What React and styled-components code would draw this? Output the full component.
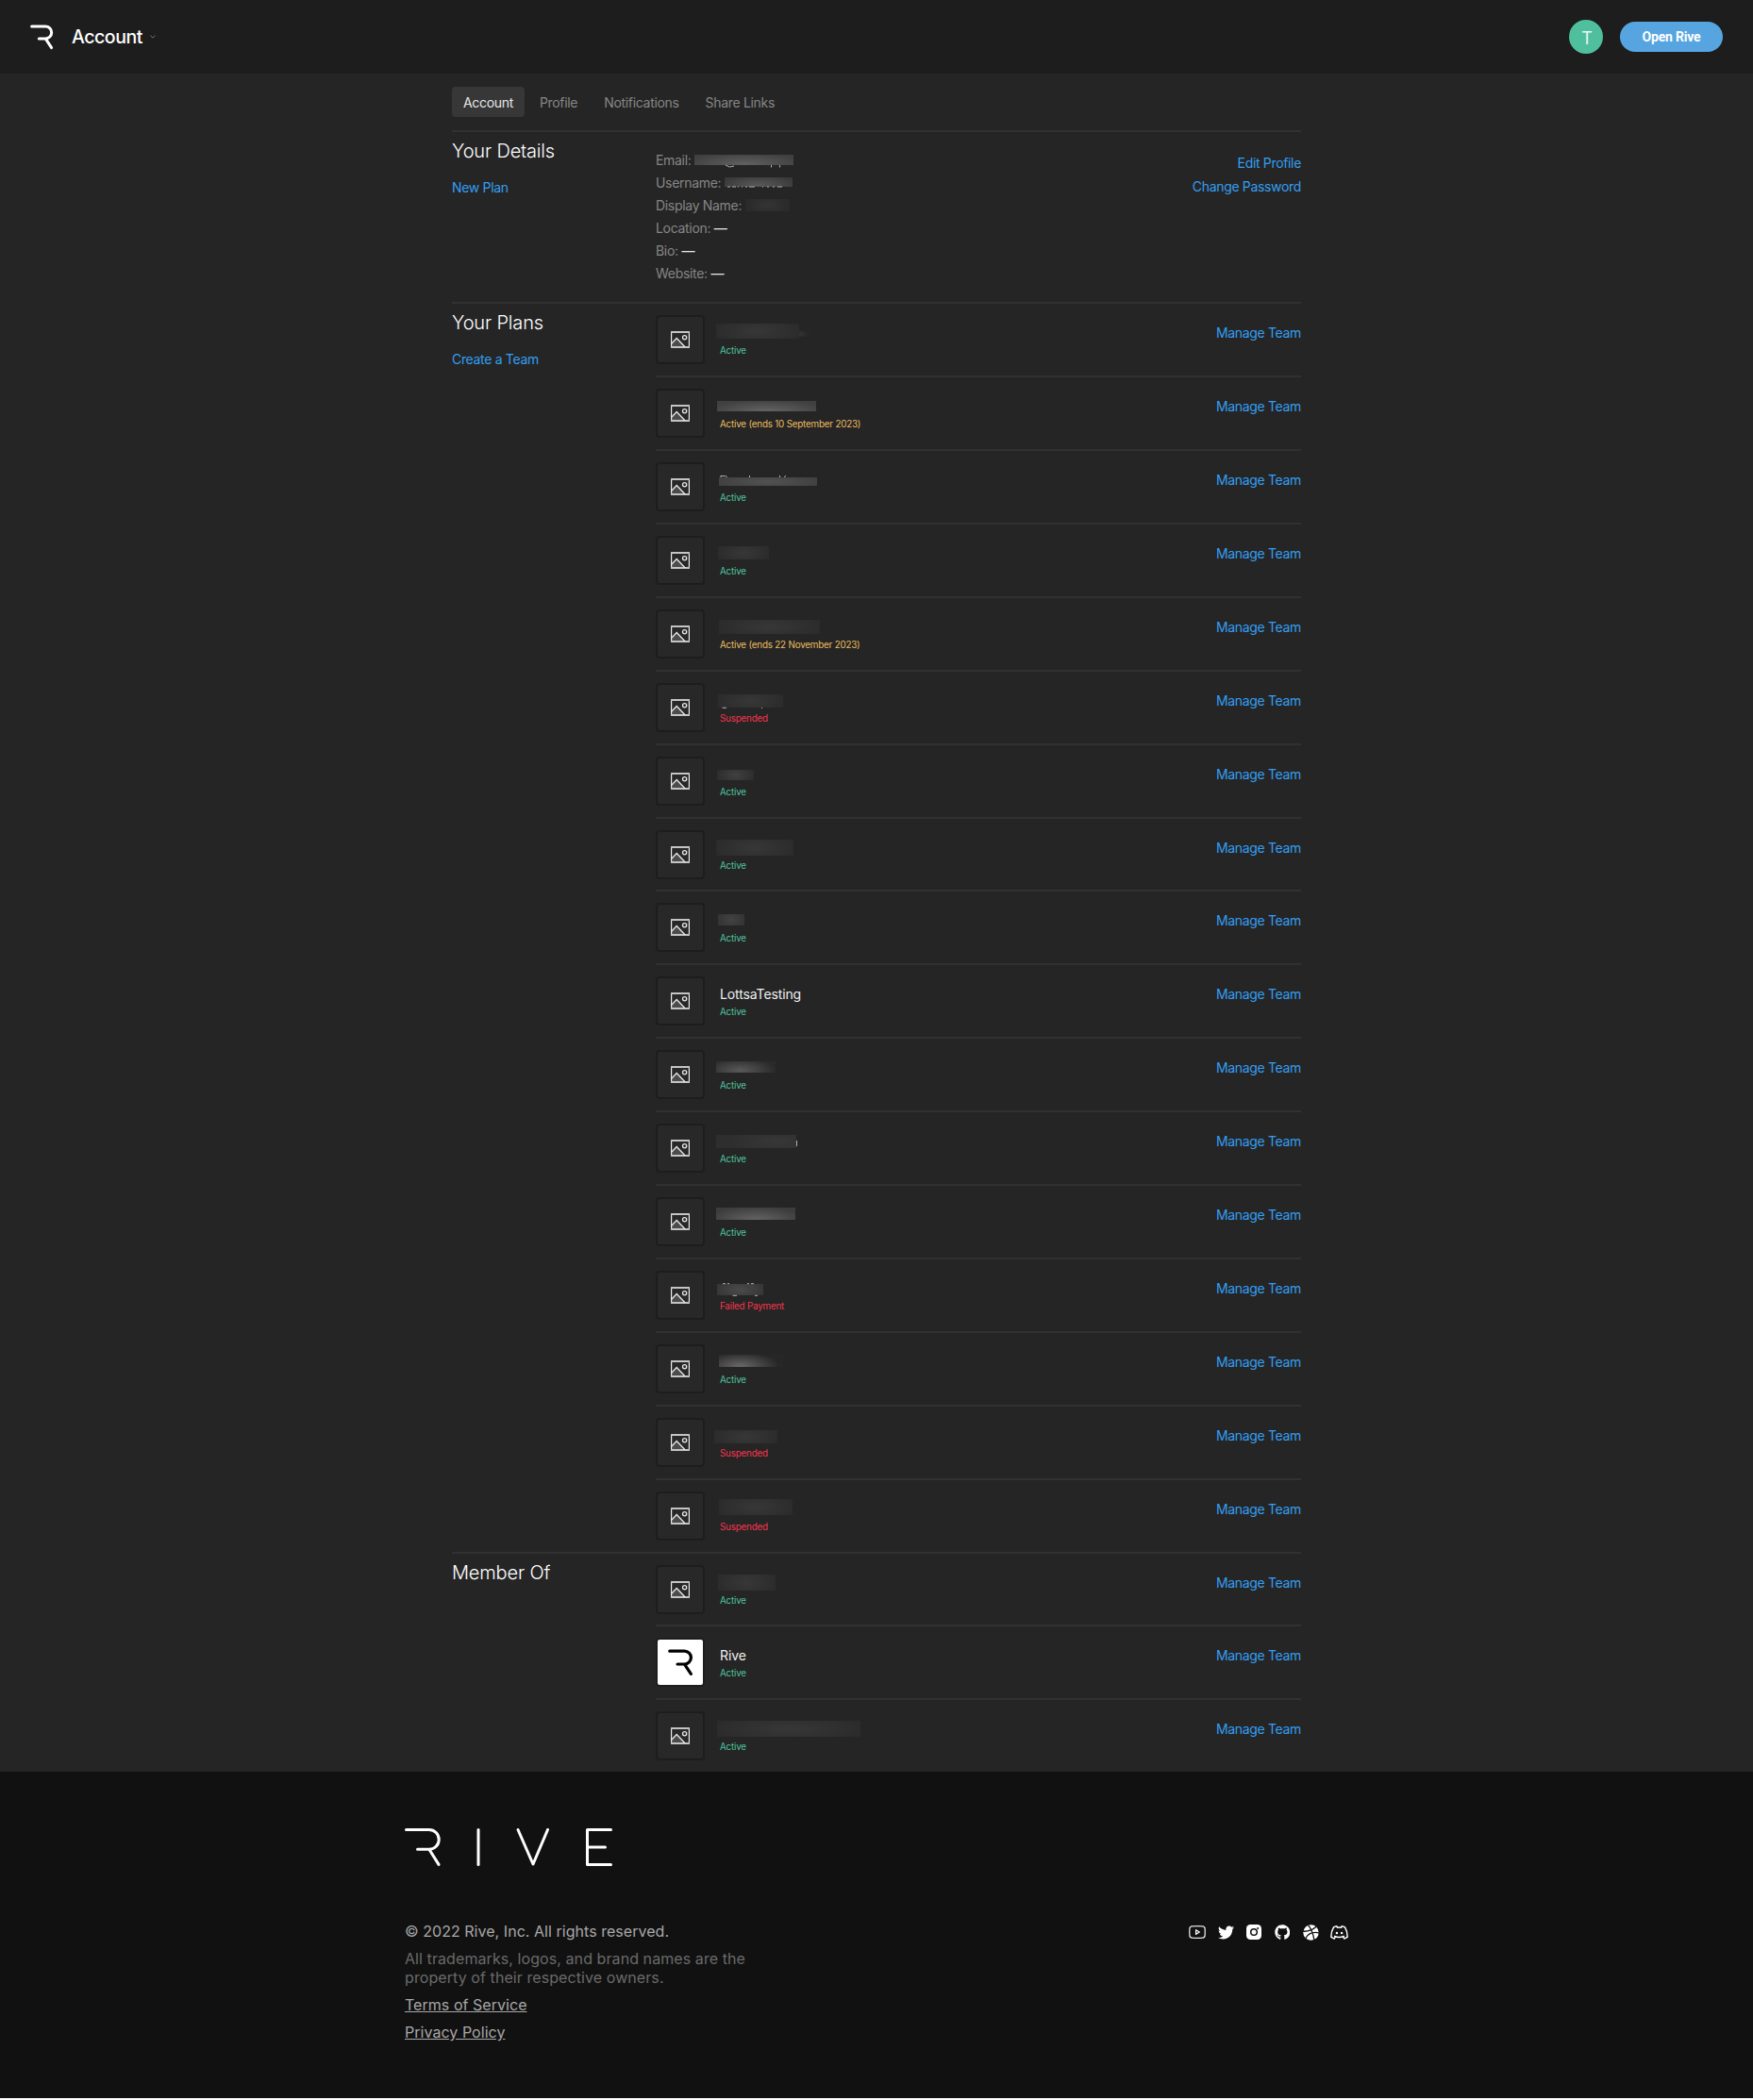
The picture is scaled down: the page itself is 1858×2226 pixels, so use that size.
import React from "react";
import styled, { createGlobalStyle } from "styled-components";
import { FaTwitter, FaGithub } from "react-icons/fa";

const GlobalStyle = createGlobalStyle`
  html, body { margin: 0; padding: 0; background: #ffffff; }
  * { box-sizing: border-box; }
  body { font-family: Inter, "Liberation Sans", sans-serif; overflow: hidden; }
`;

const Page = styled.div`
  height: 2226px;
  background: #ffffff;
`;

const Header = styled.header`
  height: 78px;
  background: #1d1d1d;
  display: flex;
  align-items: center;
  padding: 0 32px;
`;

const HeaderTitle = styled.div`
  margin-left: 19px;
  font-size: 19.5px;
  font-weight: 500;
  letter-spacing: -0.45px;
  line-height: 24px;
  color: #ffffff;
  flex: 1;
  display: flex;
  align-items: center;
  gap: 8px;
`;

const Avatar = styled.div`
  width: 36px;
  height: 36px;
  border-radius: 50%;
  background: #4fbf9d;
  color: #e9f5f1;
  font-size: 18px;
  display: flex;
  align-items: center;
  justify-content: center;
  padding: 2px 0 0 2px;
`;

const OpenButton = styled.button`
  margin-left: 18px;
  width: 109px;
  height: 32px;
  border: 0;
  padding: 0;
  border-radius: 16px;
  background: #57a5e0;
  color: #ffffff;
  font: 700 14px Roboto, sans-serif;
  letter-spacing: -0.2px;
`;

const Main = styled.main`
  height: 1800px;
  background: #252525;
`;

const Column = styled.div`
  width: 900px;
  margin: 0 auto;
`;

const Tabs = styled.nav`
  display: flex;
  height: 60px;
  padding-top: 14px;
`;

const Tab = styled.a`
  height: 32px;
  line-height: 34px;
  border-radius: 4px;
  font-size: 14px;
  font-weight: 400;
  letter-spacing: -0.32px;
  padding: 0 12px;
  margin-right: 4px;
  color: ${(p) => (p.$active ? "#e8e8e8" : "#868686")};
  background: ${(p) => (p.$active ? "#373737" : "transparent")};
`;

const Section = styled.section`
  display: flex;
  height: ${(p) => (p.$height ? p.$height + "px" : "auto")};
  border-top: ${(p) => (p.$ruled ? "2px solid #313131" : "0")};
`;

const Side = styled.div`
  width: 216px;
  flex: none;
  padding-top: 8px;
  border-top: ${(p) => (p.$ruled ? "2px solid #313131" : "0")};
`;

const SectionTitle = styled.h2`
  margin: 0 0 14px;
  font-size: 20px;
  line-height: 24px;
  font-weight: 300;
  letter-spacing: -0.16px;
  color: #ffffff;
`;

const Link = styled.a`
  display: block;
  font-size: 14px;
  line-height: 25px;
  font-weight: 400;
  letter-spacing: -0.33px;
  color: #339ff2;
`;

const Details = styled.div`
  flex: 1;
  padding-top: 18px;
`;

const Field = styled.div`
  display: flex;
  height: 24px;
  line-height: 24px;
  font-size: 14px;
  font-weight: 400;
  letter-spacing: -0.31px;
  color: #868686;
  white-space: pre;
`;

const Value = styled.span`
  color: #e6e6e6;
`;

const Actions = styled.div`
  text-align: right;
  padding-top: ${(p) => p.$top}px;
`;

const Rows = styled.div`
  flex: 1;
`;

const Row = styled.div`
  height: 77.91px;
  display: flex;
  border-top: 2px solid #313131;
  padding-top: 12px;
`;

const Thumb = styled.div`
  width: 52px;
  height: 52px;
  border: 2px solid #1d1d1d;
  border-radius: 4px;
  background: ${(p) => (p.$light ? "#ffffff" : "#282828")};
  display: flex;
  align-items: center;
  justify-content: center;
`;

const Info = styled.div`
  flex: 1;
  padding-left: 16px;
`;

const NameLine = styled.div`
  display: flex;
  align-items: flex-start;
  height: 29px;
  line-height: 37px;
  font-size: 14px;
  font-weight: 400;
  letter-spacing: -0.12px;
  color: #f0f0f0;
`;

const tones = { green: "#4fc39f", amber: "#ecbd60", red: "#f8344f" };

const Status = styled.div`
  font-size: 9.8px;
  line-height: 17px;
  font-weight: 400;
  letter-spacing: -0.18px;
  color: ${(p) => tones[p.$tone]};
`;

const Redacted = styled.div`
  margin: ${(p) => p.$y}px 0 0 ${(p) => p.$x}px;
  width: ${(p) => p.$w}px;
  height: ${(p) => p.$h}px;
  flex: none;
  background: ${(p) =>
    `radial-gradient(ellipse 60% 110% at ${p.$cx || 50}% ${p.$cy || 50}%, ${p.$c || "#373737"}, ${p.$edge || "#2a2a2a"})`};
  svg { display: block; overflow: visible; }
`;

const Footer = styled.footer`
  height: 346px;
  background: #111111;
`;

const FooterColumn = styled.div`
  width: 1000px;
  margin: 0 auto;
  padding-top: 60px;
  display: flex;
  flex-direction: column;
`;

const FooterBody = styled.div`
  margin-top: 60px;
  display: flex;
  justify-content: space-between;
`;

const Legal = styled.div`
  font-size: 16px;
  line-height: 19.3px;
  font-weight: 400;
`;

const LegalLine = styled.p`
  margin: 0 0 10px;
  letter-spacing: ${(p) => (p.$dim ? "0.08px" : "0.04px")};
  color: ${(p) => (p.$dim ? "#6a6a6a" : "#a8a8a8")};
  text-decoration: ${(p) => (p.$link ? "underline" : "none")};
`;

const Social = styled.div`
  display: flex;
  align-items: flex-start;
  gap: 10px;
  color: #ffffff;
  svg { display: block; }
`;

const IconCell = styled.span`
  width: 20px;
  height: 20px;
  display: flex;
  align-items: center;
  justify-content: center;
`;

const RiveMark = ({ color, width, height }) => (
  <svg width={width} height={height} viewBox="0 0 25 27" fill="none" stroke={color} strokeWidth="3" strokeLinecap="round" strokeLinejoin="round">
    <path d="M1.6 2H16.2a6.3 6.3 0 0 1 0 12.9H9.3M16.4 15.2L22.6 24.6" />
  </svg>
);

const RiveWordmark = () => (
  <svg width="220" height="40" viewBox="0 0 220 40" fill="none" stroke="#ffffff" strokeWidth="3" strokeLinecap="round" strokeLinejoin="round">
    <path d="M1.5 1.5H25.8a10.3 10.3 0 0 1 0 20.8H13.5M26 22.5L36 38.4" />
    <path d="M78 1.5V38.5" />
    <path d="M120 1.5L136 38L151.5 1.5" />
    <path d="M218.5 1.5H193.5V38.5H218.5M193.5 20H212.5" />
  </svg>
);

const PictureIcon = () => (
  <svg width="20" height="18" viewBox="0 0 20 18" fill="none">
    <path d="M1 13L6.5 7.5L15 17H1Z" fill="#4c4c4c" />
    <path d="M.6 0V18M19.4 0V18" stroke="#ececec" strokeWidth="1.2" />
    <path d="M0 1H20M0 17H20" stroke="#c4c4c4" strokeWidth="2" />
    <path d="M1 13L6.2 7.5L15.2 17" stroke="#e6e6e6" strokeWidth="1.3" />
    <circle cx="14.6" cy="6.8" r="2.1" stroke="#e6e6e6" strokeWidth="1.3" />
  </svg>
);

const Chevron = () => (
  <svg width="6" height="4" viewBox="0 0 6 4" fill="none" stroke="#8a8a8a" strokeWidth=".8">
    <path d="M.5 .7L3 3.1L5.5 .7" />
  </svg>
);

const Flecks = ({ d }) => (
  <svg width="1" height="1" viewBox="0 0 1 1" fill="none" stroke="#b0b0b0" strokeWidth="1">
    <path d={d} />
  </svg>
);

const YoutubeIcon = () => (
  <svg width="18" height="14" viewBox="0 0 18 14" fill="none">
    <path d="M3.4 .9Q9 .5 14.6 .9Q16.9 1.1 17.1 3.4Q17.4 7 17.1 10.6Q16.9 12.9 14.6 13.1Q9 13.5 3.4 13.1Q1.1 12.9 .9 10.6Q.6 7 .9 3.4Q1.1 1.1 3.4 .9Z" stroke="#e0e0e0" strokeWidth="1.3" />
    <path d="M7.6 4.7L11.3 7L7.6 9.3Z" stroke="#ffffff" strokeWidth="1.3" strokeLinejoin="round" />
  </svg>
);

const InstagramIcon = () => (
  <svg width="16" height="16" viewBox="0 0 16 16">
    <rect width="16" height="16" rx="4.3" fill="#ffffff" />
    <circle cx="8" cy="8" r="3.3" fill="none" stroke="#111111" strokeWidth="1.5" />
    <circle cx="12.2" cy="3.9" r="1" fill="#111111" />
  </svg>
);

const DribbbleIcon = () => (
  <svg width="17" height="17" viewBox="0 0 17 17">
    <circle cx="8.5" cy="8.5" r="8.2" fill="#ffffff" />
    <g fill="none" stroke="#111111" strokeWidth="1.3">
      <path d="M5.4 .4Q10.4 6.6 11.9 16.4" />
      <path d="M0 7.2Q8.6 7.6 14 2.3" />
      <path d="M2.8 14.6Q6.8 7 17 8.8" />
    </g>
  </svg>
);

const DiscordIcon = () => (
  <svg width="19" height="15" viewBox="0 0 19 15" fill="none" stroke="#ffffff" strokeWidth="1.5" strokeLinejoin="round" strokeLinecap="round">
    <path d="M5.2 12.2L4.3 14C3 13.6 1.8 13 .8 12.2C.8 8 1.7 4.8 3.5 1.9C4.6 1.2 5.6 .9 6.9 .8L7.5 2.2C8.8 2 10.2 2 11.5 2.2L12.1 .8C13.4 .9 14.4 1.2 15.5 1.9C17.3 4.8 18.2 8 18.2 12.2C17.2 13 16 13.6 14.7 14L13.8 12.2" />
    <path d="M4.7 11.4C7.7 12.8 11.3 12.8 14.3 11.4" />
    <circle cx="6.9" cy="8" r="1.2" fill="#ffffff" stroke="none" />
    <circle cx="12.1" cy="8" r="1.2" fill="#ffffff" stroke="none" />
  </svg>
);

const plans = [
  { bar: [-4, 9, 88, 16], tail: true, tone: "green", status: "Active" },
  { bar: [-3, 13, 105, 11], c: "#646464", edge: "#404040", cy: 100, tone: "amber", status: "Active (ends 10 September 2023)" },
  { bar: [-1, 16, 104, 9], c: "#525252", edge: "#3e3e3e", flecks: "M2 -1.5H6.5Q8.5 -1 8.5 0M2 -2V0M32.5 -2V0M64.5 -2V0M71 -2L69 0", tone: "green", status: "Active" },
  { bar: [-2, 11, 54, 14], tone: "green", status: "Active" },
  { bar: [-1, 11, 107, 15], tone: "amber", status: "Active (ends 22 November 2023)" },
  { bar: [-2, 12, 69, 14], flecks: "M4.5 14.3H9M46.5 14V15", tone: "red", status: "Suspended" },
  { bar: [-3, 14, 39, 11], tone: "green", status: "Active", c: "#414141" },
  { bar: [-4, 10, 82, 17], tone: "green", status: "Active" },
  { bar: [-2, 12, 28, 12], tone: "green", status: "Active", c: "#424242", edge: "#323232" },
  { name: "LottsaTesting", tone: "green", status: "Active" },
  { bar: [-4, 12, 63, 12], c: "#595959", cx: 40, cy: 80, tone: "green", status: "Active" },
  { bar: [-4, 12, 85, 14], cx: 75, edge: "#2e2e2e", flecks: "M85.5 6V12", tone: "green", status: "Active" },
  { bar: [-4, 11, 84, 13], c: "#646464", edge: "#3c3c3c", cy: 100, tone: "green", status: "Active" },
  { bar: [-3, 14, 49, 12], c: "#4a4a4a", edge: "#343434", flecks: "M6 -.3H9M11 -.3H13M32 -.3H34M36 -.3H39M16.5 12.3H21M40 12.3H43", tone: "red", status: "Failed Payment" },
  { bar: [-1, 11, 68, 13], c: "#676767", edge: "#272727", cx: 33, cy: 90, tone: "green", status: "Active" },
  { bar: [-6, 13, 67, 14], tone: "red", status: "Suspended" },
  { bar: [-1, 8, 78, 17], tone: "red", status: "Suspended" },
];

const memberships = [
  { bar: [-2, 10, 61, 17], tone: "green", status: "Active" },
  { name: "Rive", logo: true, tone: "green", status: "Active" },
  { bar: [-3, 10, 152, 17], tone: "green", status: "Active" },
];

const TeamRow = ({ team }) => (
  <Row>
    <Thumb $light={team.logo}>
      {team.logo ? <RiveMark color="#000000" width={27} height={29} /> : <PictureIcon />}
    </Thumb>
    <Info>
      <NameLine>
        {team.name}
        {team.bar && (
          <Redacted $x={team.bar[0]} $y={team.bar[1]} $w={team.bar[2]} $h={team.bar[3]} $c={team.c} $edge={team.edge} $cx={team.cx} $cy={team.cy}>
            {team.flecks && <Flecks d={team.flecks} />}
          </Redacted>
        )}
        {team.tail && <Redacted $x={0} $y={17} $w={13} $h={6} $c="#323232" $edge="#262626" $cx={10} />}
      </NameLine>
      <Status $tone={team.tone}>{team.status}</Status>
    </Info>
    <Actions $top={6}>
      <Link>Manage Team</Link>
    </Actions>
  </Row>
);

export default function App() {
  return (
    <Page>
      <GlobalStyle />
      <Header>
        <RiveMark color="#ffffff" width={25} height={27} />
        <HeaderTitle>
          Account <Chevron />
        </HeaderTitle>
        <Avatar>T</Avatar>
        <OpenButton>Open Rive</OpenButton>
      </Header>
      <Main>
        <Column>
          <Tabs>
            <Tab $active>Account</Tab>
            <Tab>Profile</Tab>
            <Tab>Notifications</Tab>
            <Tab>Share Links</Tab>
          </Tabs>
          <Section $ruled $height={182.18}>
            <Side>
              <SectionTitle>Your Details</SectionTitle>
              <Link>New Plan</Link>
            </Side>
            <Details>
              <Field>Email: <Redacted $x={0} $y={6} $w={105} $h={11} $c="#606060" $edge="#404040" $cy={90}><Flecks d="M33 11Q37 14.5 42 12M81.5 11V13.5M90.5 11V13.5" /></Redacted></Field>
              <Field>Username: <Redacted $x={0} $y={6} $w={72} $h={10} $c="#585858" $edge="#383838" $cy={80}><Flecks d="M3 10H6M8 10H12M14 10H15M18 10H19M22 10H24M26 10H32M40 10H41M45 10H47M51 10H53M56 10H61" /></Redacted></Field>
              <Field>Display Name: <Redacted $x={0} $y={5} $w={47} $h={13} $c="#343434" $edge="#282828" /></Field>
              <Field>Location: <Value>—</Value></Field>
              <Field>Bio: <Value>—</Value></Field>
              <Field>Website: <Value>—</Value></Field>
            </Details>
            <Actions $top={20}>
              <Link>Edit Profile</Link>
              <Link>Change Password</Link>
            </Actions>
          </Section>
          <Section>
            <Side $ruled>
              <SectionTitle>Your Plans</SectionTitle>
              <Link>Create a Team</Link>
            </Side>
            <Rows>{plans.map((t, i) => <TeamRow key={i} team={t} />)}</Rows>
          </Section>
          <Section>
            <Side $ruled>
              <SectionTitle>Member Of</SectionTitle>
            </Side>
            <Rows>{memberships.map((t, i) => <TeamRow key={i} team={t} />)}</Rows>
          </Section>
        </Column>
      </Main>
      <Footer>
        <FooterColumn>
          <RiveWordmark />
          <FooterBody>
            <Legal>
              <LegalLine>© 2022 Rive, Inc. All rights reserved.</LegalLine>
              <LegalLine $dim>All trademarks, logos, and brand names are the<br />property of their respective owners.</LegalLine>
              <LegalLine $link>Terms of Service</LegalLine>
              <LegalLine $link>Privacy Policy</LegalLine>
            </Legal>
            <Social>
              <IconCell><YoutubeIcon /></IconCell>
              <IconCell><FaTwitter size={17} /></IconCell>
              <IconCell><InstagramIcon /></IconCell>
              <IconCell><FaGithub size={16.5} /></IconCell>
              <IconCell><DribbbleIcon /></IconCell>
              <IconCell><DiscordIcon /></IconCell>
            </Social>
          </FooterBody>
        </FooterColumn>
      </Footer>
    </Page>
  );
}
